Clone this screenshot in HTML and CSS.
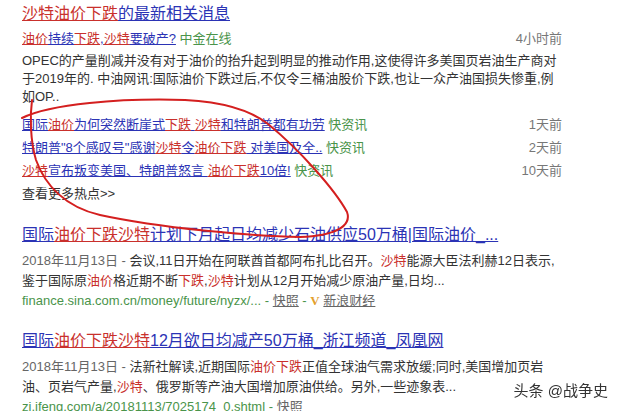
FILE: index.html
```html
<!DOCTYPE html>
<html lang="zh-CN">
<head>
    <meta charset="UTF-8">
    <meta name="viewport" content="width=device-width, initial-scale=1.0">
    <title>沙特油价下跌 - 搜索结果</title>
    <link rel="stylesheet" href="styles.css">
</head>
<body>
    <div class="page">
        <!-- news block -->
        <div class="news-block">
            <h3 class="result-title"><a href="#"><em>沙特油价下跌</em>的最新相关消息</a></h3>
            <div class="news-row">
                <span><a href="#"><em>油价</em>持续<em>下跌</em>,<em>沙特</em>要破产?</a> <span class="source">中金在线</span></span>
                <span class="time">4小时前</span>
            </div>
            <p class="news-abs">OPEC的产量削减并没有对于油价的抬升起到明显的推动作用,这使得许多美国页岩油生产商对<br>于2019年的. 中油网讯:国际油价下跌过后,不仅令三桶油股价下跌,也让一众产油国损失惨重,例<br>如OP..</p>
            <ul class="news-list">
                <li>
                    <span><a href="#">国际<em>油价</em>为何突然断崖式<em>下跌</em> <em>沙特</em>和特朗普都有功劳</a> <span class="source">快资讯</span></span>
                    <span class="time">1天前</span>
                </li>
                <li>
                    <span><a href="#">特朗普"8个感叹号"感谢<em>沙特</em>令<em>油价下跌</em> 对美国及全..</a> <span class="source">快资讯</span></span>
                    <span class="time">2天前</span>
                </li>
                <li>
                    <span><a href="#"><em>沙特</em>宣布叛变美国、特朗普怒言 <em>油价下跌</em>10倍!</a> <span class="source">快资讯</span></span>
                    <span class="time">10天前</span>
                </li>
            </ul>
            <a class="more-link" href="#">查看更多热点&gt;&gt;</a>
        </div>

        <!-- result 1 -->
        <div class="result">
            <h3 class="result-title"><a href="#">国际<em>油价下跌沙特</em>计划下月起日均减少石油供应50万桶|国际油价_...</a></h3>
            <p class="result-abs"><span class="date">2018年11月13日 - </span>会议,11日开始在阿联酋首都阿布扎比召开。<em>沙特</em>能源大臣法利赫12日表示,<br>鉴于国际原<em>油价</em>格近期不断<em>下跌</em>,<em>沙特</em>计划从12月开始减少原油产量,日均...</p>
            <div class="result-url">finance.sina.com.cn/money/future/nyzx/... - <a class="gray-link" href="#">快照</a> - <span class="v-icon">V</span> <a class="gray-link" href="#">新浪财经</a></div>
        </div>

        <!-- result 2 -->
        <div class="result">
            <h3 class="result-title"><a href="#">国际<em>油价下跌沙特</em>12月欲日均减产50万桶_浙江频道_凤凰网</a></h3>
            <p class="result-abs"><span class="date">2018年11月13日 - </span>法新社解读,近期国际<em>油价下跌</em>正值全球油气需求放缓;同时,美国增加页岩<br>油、页岩气产量,<em>沙特</em>、俄罗斯等产油大国增加原油供给。另外,一些迹象表...</p>
            <div class="result-url">zi.ifeng.com/a/20181113/7025174_0.shtml - <a class="gray-link" href="#">快照</a></div>
        </div>
    </div>

    <!-- hand drawn mark over the hot list -->
    <svg class="scribble" width="622" height="411" viewBox="0 0 622 411">
        <path d="M22,118 C50,104 120,98 185,100 C225,102 250,110 268,124 C300,150 335,190 347,212 C352,226 335,236 300,237 C250,236 160,228 100,215 C65,207 45,185 36,160 C30,140 30,115 32,100"
              fill="none" stroke="#d41f1f" stroke-width="2" stroke-linecap="round"/>
    </svg>

    <div class="watermark">头条 @战争史</div>
</body>
</html>
```

FILE: styles.css
```css
html, body {
    height: 100%;
    overflow: hidden;
}

body {
    margin: 0;
    font-family: "Liberation Sans", "Noto Sans CJK SC", sans-serif;
    font-size: 13px;
    color: #333;
    background-color: #fff;
}

.page {
    width: 540px;
    padding: 3px 0 0 22px;
}

a {
    color: #2b33b5;
    text-decoration: underline;
}

em {
    font-style: normal;
    color: #c9302c;
}

a em {
    text-decoration: underline;
}

.result-title {
    margin: 0;
    font-size: 16px;
    font-weight: normal;
    line-height: 22px;
}

.news-row {
    display: flex;
    justify-content: space-between;
    margin-top: 4px;
    line-height: 20px;
}

.source {
    color: #4a944a;
}

.time {
    color: #777;
}

.news-abs {
    margin: 3px 0 0;
    line-height: 18px;
}

.news-list {
    list-style: none;
    margin: 7px 0 0;
    padding: 0;
}

.news-list li {
    display: flex;
    justify-content: space-between;
    line-height: 23px;
}

.more-link {
    display: block;
    line-height: 23px;
    color: #333;
    text-decoration: none;
}

.result {
    margin-top: 19px;
}

.result-abs {
    margin: 5px 0 0;
    line-height: 20px;
}

.date {
    color: #666;
}

.result-url {
    line-height: 20px;
    color: #4a944a;
}

.result-url .gray-link {
    color: #666;
}

.v-icon {
    font-family: "Liberation Serif", serif;
    font-weight: bold;
    color: #e3a02c;
}

/* overlays */
.scribble {
    position: fixed;
    top: 0;
    left: 0;
    pointer-events: none;
}

.watermark {
    position: fixed;
    right: 14px;
    bottom: 11px;
    font-size: 15px;
    color: #333;
    text-shadow: 0 0 2px #fff, 0 0 3px #fff;
}
```
